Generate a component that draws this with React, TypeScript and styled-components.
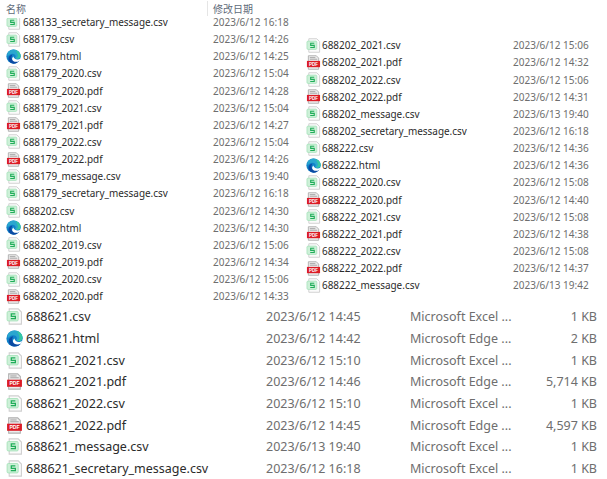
import styled, { createGlobalStyle, css } from "styled-components";

type Kind = "csv" | "pdf" | "html";
type TopFile = [string, string];
type BottomFile = [string, string, string, string];

const leftFiles: TopFile[] = [
  ["688133_secretary_message.csv", "2023/6/12 16:18"],
  ["688179.csv", "2023/6/12 14:26"],
  ["688179.html", "2023/6/12 14:25"],
  ["688179_2020.csv", "2023/6/12 15:04"],
  ["688179_2020.pdf", "2023/6/12 14:28"],
  ["688179_2021.csv", "2023/6/12 15:04"],
  ["688179_2021.pdf", "2023/6/12 14:27"],
  ["688179_2022.csv", "2023/6/12 15:04"],
  ["688179_2022.pdf", "2023/6/12 14:26"],
  ["688179_message.csv", "2023/6/13 19:40"],
  ["688179_secretary_message.csv", "2023/6/12 16:18"],
  ["688202.csv", "2023/6/12 14:30"],
  ["688202.html", "2023/6/12 14:30"],
  ["688202_2019.csv", "2023/6/12 15:06"],
  ["688202_2019.pdf", "2023/6/12 14:34"],
  ["688202_2020.csv", "2023/6/12 15:06"],
  ["688202_2020.pdf", "2023/6/12 14:33"],
];

const rightFiles: TopFile[] = [
  ["688202_2021.csv", "2023/6/12 15:06"],
  ["688202_2021.pdf", "2023/6/12 14:32"],
  ["688202_2022.csv", "2023/6/12 15:06"],
  ["688202_2022.pdf", "2023/6/12 14:31"],
  ["688202_message.csv", "2023/6/13 19:40"],
  ["688202_secretary_message.csv", "2023/6/12 16:18"],
  ["688222.csv", "2023/6/12 14:36"],
  ["688222.html", "2023/6/12 14:36"],
  ["688222_2020.csv", "2023/6/12 15:08"],
  ["688222_2020.pdf", "2023/6/12 14:40"],
  ["688222_2021.csv", "2023/6/12 15:08"],
  ["688222_2021.pdf", "2023/6/12 14:38"],
  ["688222_2022.csv", "2023/6/12 15:08"],
  ["688222_2022.pdf", "2023/6/12 14:37"],
  ["688222_message.csv", "2023/6/13 19:42"],
];

const bottomFiles: BottomFile[] = [
  ["688621.csv", "2023/6/12 14:45", "Microsoft Excel ...", "1 KB"],
  ["688621.html", "2023/6/12 14:42", "Microsoft Edge ...", "2 KB"],
  ["688621_2021.csv", "2023/6/12 15:10", "Microsoft Excel ...", "1 KB"],
  ["688621_2021.pdf", "2023/6/12 14:46", "Microsoft Edge ...", "5,714 KB"],
  ["688621_2022.csv", "2023/6/12 15:10", "Microsoft Excel ...", "1 KB"],
  ["688621_2022.pdf", "2023/6/12 14:45", "Microsoft Edge ...", "4,597 KB"],
  ["688621_message.csv", "2023/6/13 19:40", "Microsoft Excel ...", "1 KB"],
  ["688621_secretary_message.csv", "2023/6/12 16:18", "Microsoft Excel ...", "1 KB"],
];

const kindOf = (name: string): Kind => {
  if (name.endsWith(".pdf")) return "pdf";
  if (name.endsWith(".html")) return "html";
  return "csv";
};

const FileIcon = ({ kind, size }: { kind: Kind; size: number }) => {
  if (kind === "html") {
    return (
      <svg width={size} height={size} viewBox="0 0 16 16">
        <circle cx="8" cy="8" r="7.600" fill="#1183c9" />
        <path d="M2 3.500C3.500 1.500 5.600 0.400 8 0.400c4.300 0 7.600 3.300 7.600 7 0 1.900-1.400 3-3.200 3-1.400 0-2.600-.5-2.600-1.200 0-.4.500-.6.500-1.500C10.300 6.100 8.700 4.900 6.700 5 4.800 5.100 3 6 1.900 7.600 1.200 6.300 1.300 4.800 2 3.500Z" fill="#2aa6cf" />
        <path d="M10 1c3.400 1 5.600 3.500 5.600 6.400 0 1.900-1.400 3-3.200 3-.7 0-1.400-.1-1.900-.4 1.700-.6 2.500-1.800 2.100-3.500C12.200 4.500 11.400 2.500 10 1Z" fill="#35c8a2" />
        <path d="M6.800 5.800c-2.400.3-4.200 2.200-4.200 4.500 0 2.900 2.600 5.300 5.800 5.300 2.600 0 4.700-1.300 5.800-3.400-1 .6-2.200 1-3.400 1-2.900 0-5-1.600-5-4 0-1.300.3-2.500 1-3.400Z" fill="#0a4aa3" />
        <path d="M7.900 7.900c.3 1.800 1.900 3.100 4.400 3.300 1.100.1 2.300-.3 3-1-.2 1-.6 1.800-1.100 2.500-1 .6-2.200 1-3.400 1-2.200 0-3.700-1-4.200-2.600-.3-1.200.4-2.400 1.300-3.200Z" fill="#ffffff" />
      </svg>
    );
  }
  if (kind === "pdf") {
    return (
      <svg width={size} height={size} viewBox="0 0 16 16">
        <path d="M2.500 0.800h8.500L13.500 3.300V15.200H2.500Z" fill="#ededed" stroke="#b0b0b0" strokeWidth="1" />
        <path d="M4 2.800h6M4 4.500h8" stroke="#9c9c9c" strokeWidth="0.900" />
        <rect x="1" y="6.300" width="14" height="6.700" fill="#db1c26" />
        <text x="8" y="11.500" textAnchor="middle" fontSize="4.800" fontWeight="700" fontFamily="Liberation Sans, sans-serif" fill="#ffffff">
          PDF
        </text>
      </svg>
    );
  }
  return (
    <svg width={size} height={size} viewBox="0 0 16 16">
      <path d="M3 0.800h8.500L14.500 3.800V15.200H3Z" fill="#fbfbfb" stroke="#cfcfcf" strokeWidth="1" />
      <rect x="1" y="3.300" width="10.500" height="8.900" rx="1.200" fill="#cdf0d8" stroke="#9cdfb2" strokeWidth="0.700" />
      <path d="M8.800 5.600H5v2.200h3.800v2.300H4.500" fill="none" stroke="#20ad59" strokeWidth="1.200" />
    </svg>
  );
};

const TopFileRow = ({ file, cut = false }: { file: TopFile; cut?: boolean }) => (
  <SmallRow $cut={cut}>
    <IconSlot $cut={cut}>
      <FileIcon kind={kindOf(file[0])} size={15} />
    </IconSlot>
    <SmallName>{file[0]}</SmallName>
    <SmallDate>{file[1]}</SmallDate>
  </SmallRow>
);

const App = () => (
  <>
    <GlobalStyle />
    <Page>
      <TopArea>
        <LeftPane>
          <Header>
            <HeaderName>名称</HeaderName>
            <HeaderDivider />
            <HeaderDate>修改日期</HeaderDate>
          </Header>
          {leftFiles.map((file, i) => (
            <TopFileRow key={file[0]} file={file} cut={i === 0} />
          ))}
        </LeftPane>
        <RightPane>
          {rightFiles.map((file) => (
            <TopFileRow key={file[0]} file={file} />
          ))}
        </RightPane>
      </TopArea>
      <BottomList>
        {bottomFiles.map((file) => (
          <LargeRow key={file[0]}>
            <FileIcon kind={kindOf(file[0])} size={17} />
            <LargeName>{file[0]}</LargeName>
            <LargeMuted>{file[1]}</LargeMuted>
            <LargeMuted>{file[2]}</LargeMuted>
            <LargeSize>{file[3]}</LargeSize>
          </LargeRow>
        ))}
      </BottomList>
    </Page>
  </>
);

const GlobalStyle = createGlobalStyle`
  html, body {
    margin: 0;
    padding: 0;
    background: #ffffff;
  }
  body {
    font-family: "Noto Sans", "Noto Sans CJK SC", sans-serif;
  }
`;

const Page = styled.div`
  width: 607px;
  height: 479px;
  overflow: hidden;
  background: #ffffff;
`;

const TopArea = styled.div`
  display: grid;
  grid-template-columns: 300px 307px;
  height: 306px;
`;

const LeftPane = styled.div`
  display: flex;
  flex-direction: column;
`;

const Header = styled.div`
  display: flex;
  align-items: center;
  height: 17px;
  padding-left: 6px;
  flex: none;
`;

const HeaderName = styled.span`
  width: 201px;
  font-size: 10px;
  line-height: 12px;
  color: #5f6b7a;
`;

const HeaderDivider = styled.span`
  width: 1px;
  height: 15px;
  background: #e5e5e5;
`;

const HeaderDate = styled.span`
  margin-left: 5px;
  font-size: 10px;
  line-height: 12px;
  color: #5f6b7a;
`;

const RightPane = styled.div`
  padding: 36.7px 0 0 6px;
`;

const SmallRow = styled.div<{ $cut: boolean }>`
  display: flex;
  flex: none;
  box-sizing: border-box;
  align-items: center;
  height: 17.15px;
  padding-left: 6px;
  ${RightPane} & {
    padding-left: 0;
  }
  /* the first row is scrolled partly under the header */
  ${(p) =>
    p.$cut &&
    css`
      height: 13.55px;
      padding-bottom: 3.6px;
    `}
`;

const IconSlot = styled.span<{ $cut: boolean }>`
  display: flex;
  width: 17px;
  flex: none;
  ${RightPane} & {
    width: 16px;
  }
  ${(p) =>
    p.$cut &&
    css`
      align-self: flex-start;
      align-items: flex-end;
      height: 11.5px;
      margin-top: 1px;
      overflow: hidden;
    `}
`;

const SmallName = styled.span`
  width: 190px;
  flex: none;
  font-size: 9.95px;
  line-height: 10px;
  color: #2b2b2b;
  white-space: nowrap;
  ${RightPane} & {
    width: 191px;
  }
`;

const SmallDate = styled.span`
  font-size: 10px;
  line-height: 10px;
  color: #6e6e6e;
  white-space: nowrap;
`;

const BottomList = styled.div`
  display: flex;
  flex-direction: column;
`;

const LargeRow = styled.div`
  display: grid;
  grid-template-columns: 20px 240px 144px 120px 1fr;
  align-items: center;
  height: 21.7px;
  padding: 0 10px 0 6px;
`;

const LargeName = styled.span`
  font-size: 12.5px;
  color: #2b2b2b;
  white-space: nowrap;
`;

const LargeMuted = styled.span`
  font-size: 12.5px;
  color: #6e6e6e;
  white-space: nowrap;
`;

const LargeSize = styled(LargeMuted)`
  text-align: right;
`;

export default App;
